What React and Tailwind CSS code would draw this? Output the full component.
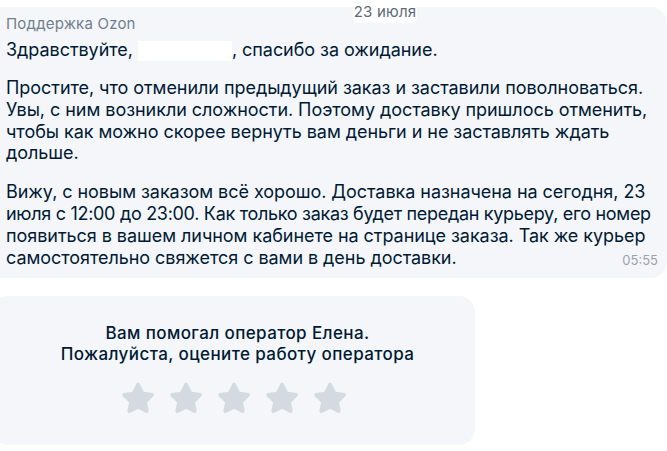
import React from 'react';

const font = { fontFamily: 'Inter, "Noto Sans", sans-serif' };

function Star() {
  return (
    <svg viewBox="0 0 24 24" className="h-[40px] w-[40px]" aria-hidden="true">
      <path
        d="M12 2.8c.5 0 .9.3 1.1.7l2.3 4.7 5.1.8c1 .1 1.4 1.3.7 2l-3.7 3.6.9 5.1c.2 1-.9 1.7-1.7 1.2L12 18.5l-4.6 2.4c-.9.5-1.9-.3-1.7-1.2l.9-5.1-3.7-3.6c-.7-.7-.3-1.9.7-2l5.1-.8 2.3-4.7c.2-.4.6-.7 1-.7z"
        fill="#d5dae1"
      />
    </svg>
  );
}

export default function App() {
  return (
    <div className="w-[667px] h-[451px] bg-white overflow-hidden relative text-[#001a34]" style={font}>
      {/* day separator */}
      <div className="absolute left-[353px] top-0 z-10 flex h-[23px] w-[64px] items-center justify-center rounded-b-md bg-white text-[15px] leading-[18px] tracking-[0.2px] text-[#5d6a78]">
        23 июля
      </div>

      <div className="pt-[7px]">
        <div className="ml-[-16px] rounded-2xl bg-[#f5f6fa] pl-[22px] pr-0 pt-[8px] pb-[11px]">
          <div className="text-[15px] leading-[18px] tracking-[0.2px] text-[#707f8d]">Поддержка Ozon</div>
          <div className="mt-[6px] whitespace-nowrap text-[18px] leading-[21.8px] tracking-[-0.05px]">
            <p>
              Здравствуйте,{' '}
              <span className="inline-block h-[20px] w-[94px] bg-white align-middle" />
              , спасибо за ожидание.
            </p>
            <p className="mt-[16px]">
              Простите, что отменили предыдущий заказ и заставили поволноваться.
              <br />
              Увы, с ним возникли сложности. Поэтому доставку пришлось отменить,
              <br />
              чтобы как можно скорее вернуть вам деньги и не заставлять ждать
              <br />
              дольше.
            </p>
            <p className="mt-[17px]">
              Вижу, с новым заказом всё хорошо. Доставка назначена на сегодня, 23
              <br />
              <span className="tracking-[-0.3px]">
                июля с 12:00 до 23:00. Как только заказ будет передан курьеру, его номер
              </span>
              <br />
              появиться в вашем личном кабинете на странице заказа. Так же курьер
              <br />
              самостоятельно свяжется с вами в день доставки.
            </p>
          </div>
          <div className="-mt-[15px] pr-[9px] text-right text-[13px] leading-[14px] text-[#99a3ae]">05:55</div>
        </div>

        <div className="mt-[18px] ml-[-8px] w-[483px] rounded-2xl bg-[#f5f6fa] pt-[27px] pb-[27px] pl-[8px]">
          <div className="text-center text-[17px] font-medium leading-[21px] tracking-[0.4px]">
            <div>Вам помогал оператор Елена.</div>
            <div>Пожалуйста, оцените работу оператора</div>
          </div>
          <div className="mt-[13px] flex justify-center gap-[8px] pr-[8px]">
            <Star />
            <Star />
            <Star />
            <Star />
            <Star />
          </div>
        </div>
      </div>
    </div>
  );
}
